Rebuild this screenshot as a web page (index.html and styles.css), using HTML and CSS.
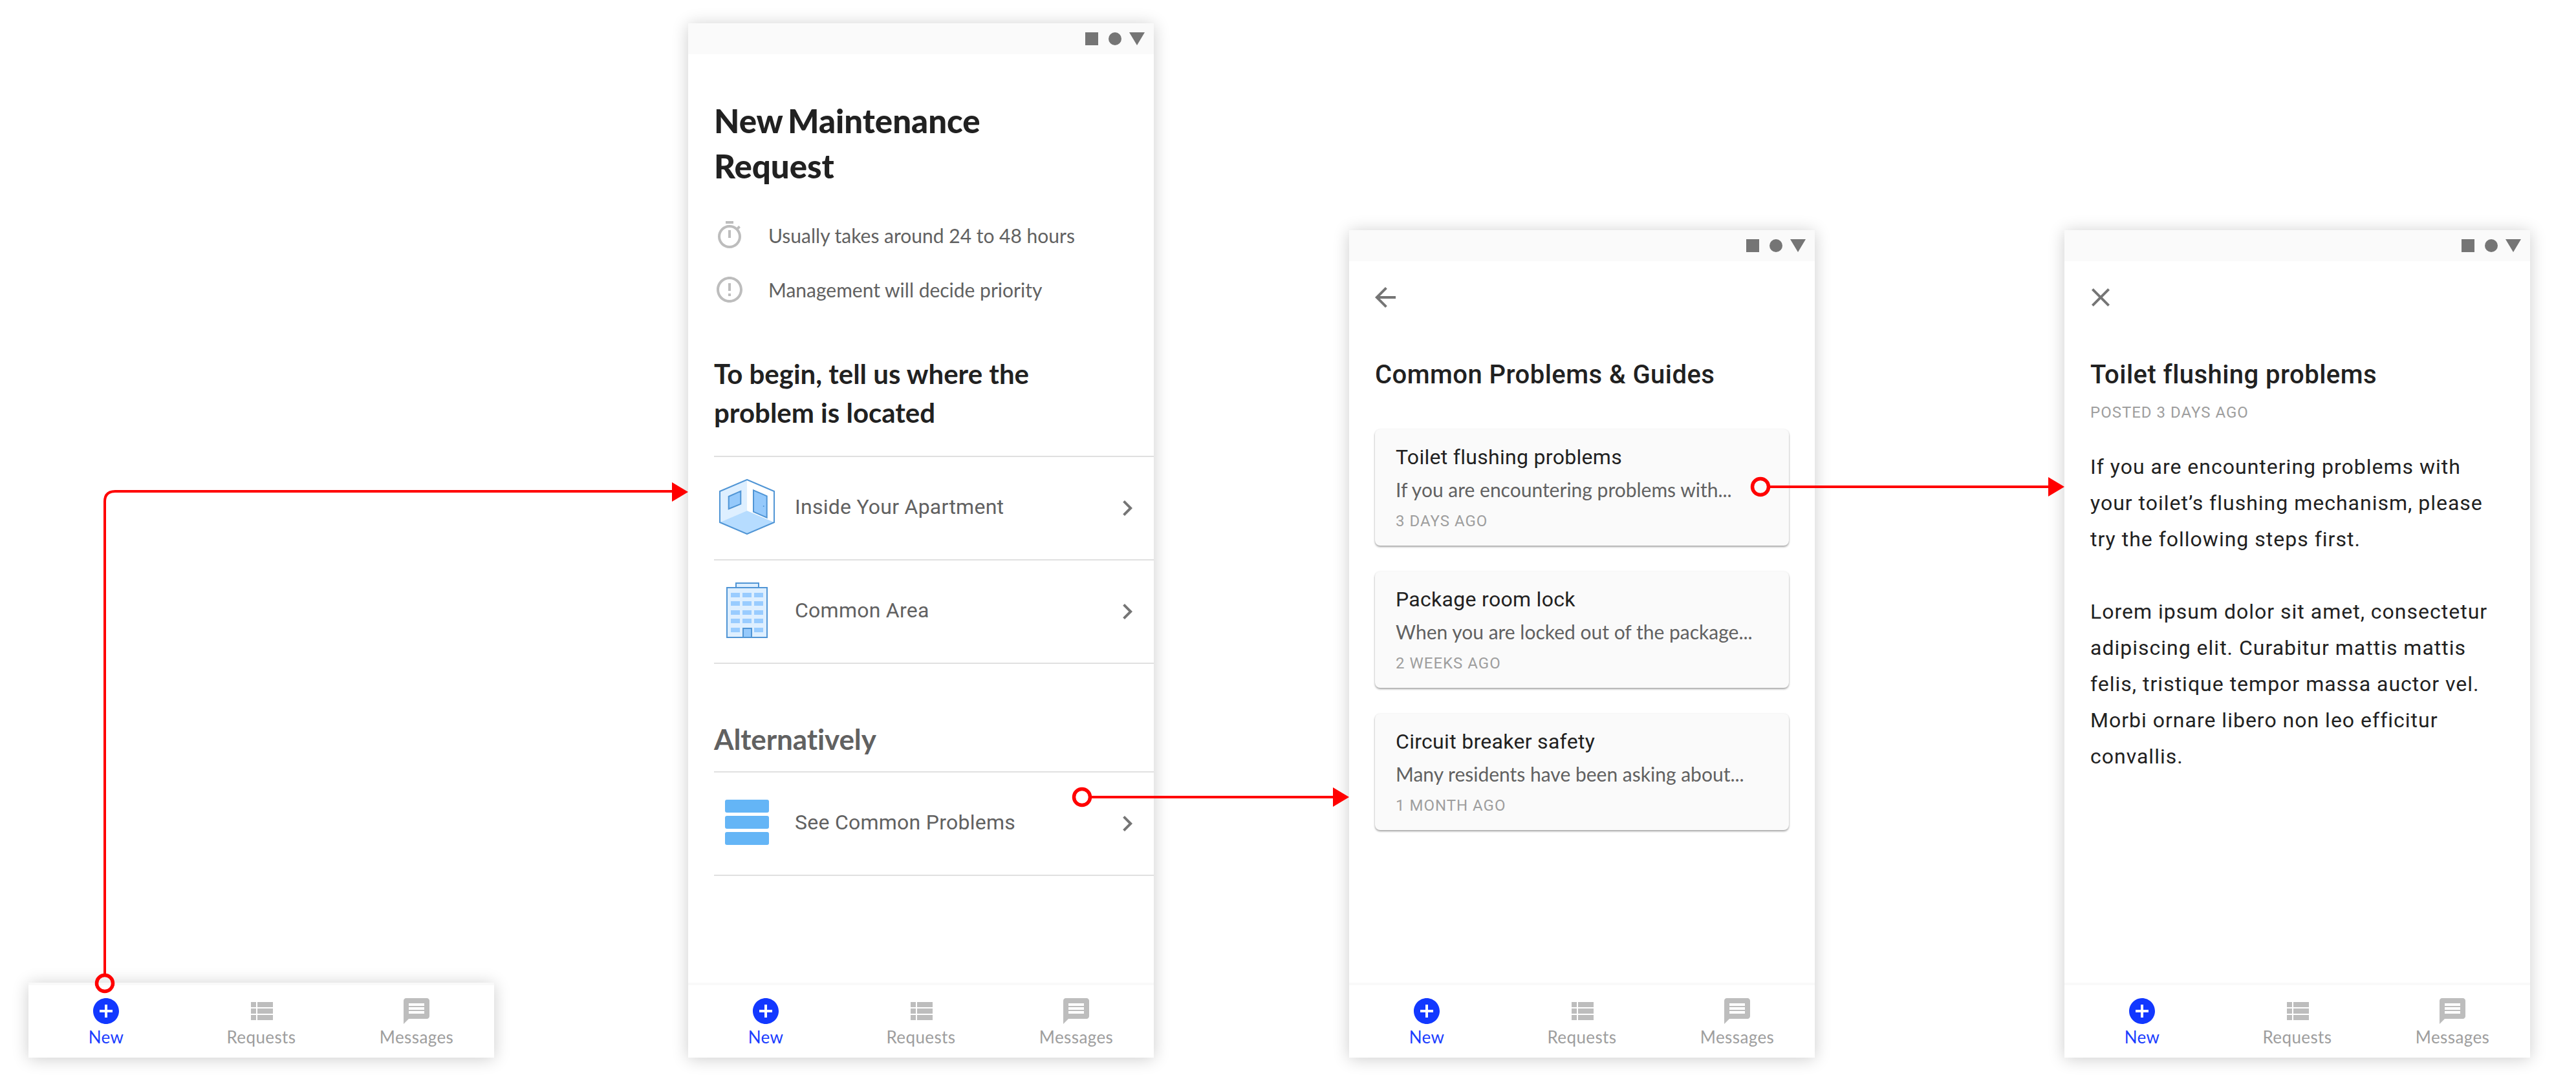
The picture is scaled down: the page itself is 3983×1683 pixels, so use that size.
FILE: index.html
```html
<!DOCTYPE html>
<html lang="en">
<head>
<meta charset="utf-8">
<title>Maintenance request flow</title>
<link rel="stylesheet" href="styles.css">
</head>
<body>
<svg class="defs" width="0" height="0" aria-hidden="true">
  <symbol id="i-add" viewBox="0 0 24 24"><path d="M12 2C6.48 2 2 6.48 2 12s4.48 10 10 10 10-4.48 10-10S17.52 2 12 2zm5 11h-4v4h-2v-4H7v-2h4V7h2v4h4v2z"/></symbol>
  <symbol id="i-list" viewBox="0 0 24 24"><path d="M4 14h4v-4H4v4zm0 5h4v-4H4v4zM4 9h4V5H4v4zm5 5h12v-4H9v4zm0 5h12v-4H9v4zM9 5v4h12V5H9z"/></symbol>
  <symbol id="i-msg" viewBox="0 0 24 24"><path d="M20 2H4c-1.1 0-1.99.9-1.99 2L2 22l4-4h14c1.1 0 2-.9 2-2V4c0-1.1-.9-2-2-2zm-2 12H6v-2h12v2zm0-3H6V9h12v2zm0-3H6V6h12v2z"/></symbol>
  <symbol id="i-chev" viewBox="0 0 24 24"><path d="M10 6L8.59 7.41 13.17 12l-4.58 4.59L10 18l6-6z"/></symbol>
  <symbol id="i-timer" viewBox="0 0 24 24"><path d="M15 1H9v2h6V1zm-4 13h2V8h-2v6zm8.03-6.61l1.42-1.42c-.43-.51-.9-.99-1.41-1.41l-1.42 1.42C16.07 4.74 14.12 4 12 4c-4.97 0-9 4.03-9 9s4.02 9 9 9 9-4.03 9-9c0-2.12-.74-4.07-1.97-5.61zM12 20c-3.87 0-7-3.13-7-7s3.13-7 7-7 7 3.13 7 7-3.13 7-7 7z"/></symbol>
  <symbol id="i-error" viewBox="0 0 24 24"><path d="M11 15h2v2h-2zm0-8h2v6h-2zm.99-5C6.47 2 2 6.48 2 12s4.47 10 9.99 10C17.52 22 22 17.52 22 12S17.52 2 11.99 2zM12 20c-4.42 0-8-3.58-8-8s3.58-8 8-8 8 3.58 8 8-3.58 8-8 8z"/></symbol>
  <symbol id="i-back" viewBox="0 0 24 24"><path d="M20 11H7.83l5.59-5.59L12 4l-8 8 8 8 1.41-1.41L7.83 13H20v-2z"/></symbol>
  <symbol id="i-close" viewBox="0 0 24 24"><path d="M19 6.41L17.59 5 12 10.59 6.41 5 5 6.41 10.59 12 5 17.59 6.41 19 12 13.41 17.59 19 19 17.59 13.41 12z"/></symbol>
  <symbol id="i-status" viewBox="0 0 92 20"><rect x="0" y="0" width="20" height="20"/><circle cx="46" cy="10" r="10"/><path d="M68 0h24L80 20z"/></symbol>
</svg>

<main class="canvas">
  <nav class="tabbar tabbar-solo">
    <div class="tab tab-active"><svg class="tab-icon"><use href="#i-add"/></svg><span>New</span></div>
    <div class="tab"><svg class="tab-icon"><use href="#i-list"/></svg><span>Requests</span></div>
    <div class="tab"><svg class="tab-icon"><use href="#i-msg"/></svg><span>Messages</span></div>
  </nav>

  <section class="phone phone-tall phone-a">
    <div class="status"><svg class="status-icons"><use href="#i-status"/></svg></div>
    <div class="request">
      <h1 class="request-title">New Maintenance<br>Request</h1>
      <div class="facts">
        <div class="fact"><svg class="icon-48 icon-light"><use href="#i-timer"/></svg><span>Usually takes around 24 to 48 hours</span></div>
        <div class="fact"><svg class="icon-48 icon-light"><use href="#i-error"/></svg><span>Management will decide priority</span></div>
      </div>
      <h2 class="request-sub">To begin, tell us where the<br>problem is located</h2>
    </div>
    <div class="list list-first">
      <div class="row">
        <div class="row-icon">
          <svg class="art-hex" viewBox="0 0 86 86">
            <path class="wall" d="M43 1L1 19v48l42-18z"/>
            <path class="floor" d="M43 49L1 67l42 18 42-18z"/>
            <path class="art-line" d="M43 1L85 19v48L43 85 1 67V19z"/>
            <path class="pane" d="M14.7 27l18.600-8.300v20L14.700 46.300z"/>
            <path class="pane" d="M53 17.300l20.700 9v33.400L53 50.700z"/>
            <circle class="knob" cx="68.700" cy="42" r="1"/>
          </svg>
        </div>
        <span class="row-label">Inside Your Apartment</span>
        <svg class="icon-48 icon-dark chev"><use href="#i-chev"/></svg>
      </div>
      <div class="row">
        <div class="row-icon">
          <svg class="art-building" viewBox="0 0 64 86">
            <path class="wall art-line" d="M15 8V1h35v7"/>
            <path class="wall art-line" d="M1 8h62v77H1z"/>
            <path class="pane-flat" d="M7 16h14v7H7zM25 16h14v7H25zM43 16h14v7H43zM7 29h14v7H7zM25 29h14v7H25zM43 29h14v7H43zM7 43h14v7H7zM25 43h14v7H25zM43 43h14v7H43zM7 56h14v7H7zM25 56h14v7H25zM43 56h14v7H43zM7 70h14v7H7zM43 70h14v7H43z"/>
            <path class="pane" d="M26 71h13v14H26z"/>
          </svg>
        </div>
        <span class="row-label">Common Area</span>
        <svg class="icon-48 icon-dark chev"><use href="#i-chev"/></svg>
      </div>
    </div>
    <h2 class="request-alt">Alternatively</h2>
    <div class="list">
      <div class="row">
        <div class="row-icon">
          <div class="stack"><i></i><i></i><i></i></div>
        </div>
        <span class="row-label">See Common Problems</span>
        <svg class="icon-48 icon-dark chev"><use href="#i-chev"/></svg>
      </div>
    </div>
    <nav class="tabbar">
      <div class="tab tab-active"><svg class="tab-icon"><use href="#i-add"/></svg><span>New</span></div>
      <div class="tab"><svg class="tab-icon"><use href="#i-list"/></svg><span>Requests</span></div>
      <div class="tab"><svg class="tab-icon"><use href="#i-msg"/></svg><span>Messages</span></div>
    </nav>
  </section>

  <section class="phone phone-short phone-b">
    <div class="status"><svg class="status-icons"><use href="#i-status"/></svg></div>
    <div class="pane-body">
      <svg class="icon-48 icon-dark nav-icon"><use href="#i-back"/></svg>
      <h2 class="screen-title">Common Problems &amp; Guides</h2>
      <div class="cards">
        <article class="card">
          <h3>Toilet flushing problems</h3>
          <p>If you are encountering problems with...</p>
          <time>3 days ago</time>
        </article>
        <article class="card">
          <h3>Package room lock</h3>
          <p>When you are locked out of the package...</p>
          <time>2 weeks ago</time>
        </article>
        <article class="card">
          <h3>Circuit breaker safety</h3>
          <p>Many residents have been asking about...</p>
          <time>1 month ago</time>
        </article>
      </div>
    </div>
    <nav class="tabbar">
      <div class="tab tab-active"><svg class="tab-icon"><use href="#i-add"/></svg><span>New</span></div>
      <div class="tab"><svg class="tab-icon"><use href="#i-list"/></svg><span>Requests</span></div>
      <div class="tab"><svg class="tab-icon"><use href="#i-msg"/></svg><span>Messages</span></div>
    </nav>
  </section>

  <section class="phone phone-short phone-c">
    <div class="status"><svg class="status-icons"><use href="#i-status"/></svg></div>
    <div class="pane-body">
      <svg class="icon-48 icon-dark nav-icon"><use href="#i-close"/></svg>
      <h2 class="screen-title">Toilet flushing problems</h2>
      <div class="posted">Posted 3 days ago</div>
      <div class="article">
        <p>If you are encountering problems with your toilet’s flushing mechanism, please try the following steps first.</p>
        <p>Lorem ipsum dolor sit amet, consectetur adipiscing elit. Curabitur mattis mattis felis, tristique tempor massa auctor vel. Morbi ornare libero non leo efficitur convallis.</p>
      </div>
    </div>
    <nav class="tabbar">
      <div class="tab tab-active"><svg class="tab-icon"><use href="#i-add"/></svg><span>New</span></div>
      <div class="tab"><svg class="tab-icon"><use href="#i-list"/></svg><span>Requests</span></div>
      <div class="tab"><svg class="tab-icon"><use href="#i-msg"/></svg><span>Messages</span></div>
    </nav>
  </section>

  <svg class="wires" viewBox="0 0 3983 1683">
    <path class="wire" d="M162 1507V776q0-16 16-16H1042"/>
    <circle class="node" cx="162" cy="1521" r="12.500"/>
    <path class="tip" d="M1039 746l25 15-25 15z"/>
    <path class="wire" d="M1686 1233H2064"/>
    <circle class="node" cx="1673" cy="1233" r="12.500"/>
    <path class="tip" d="M2061 1218l25 15-25 15z"/>
    <path class="wire" d="M2735 753H3170"/>
    <circle class="node" cx="2722" cy="753" r="12.500"/>
    <path class="tip" d="M3167 738l25 15-25 15z"/>
  </svg>
</main>
</body>
</html>
```
FILE: styles.css
```css
* { box-sizing: border-box; }
html, body { margin: 0; padding: 0; background: #fff; }
body { font-family: "Roboto", sans-serif; color: #212121; }
h1, h2, h3, p { margin: 0; }
.defs { position: absolute; }

.canvas {
  position: relative;
  width: 3983px;
  height: 1683px;
  display: flex;
  align-items: flex-end;
  padding: 0 0 47px 44px;
  overflow: hidden;
}

.phone {
  width: 720px;
  display: flex;
  flex-direction: column;
  background: #fff;
  box-shadow: 0 2px 24px rgba(0, 0, 0, .2);
}
.phone-tall { height: 1600px; }
.phone-short { height: 1280px; }
.phone-a { margin-left: 300px; }
.phone-b { margin-left: 302px; }
.phone-c { margin-left: 386px; }

.status {
  height: 48px;
  flex: none;
  background: #fafafa;
  display: flex;
  justify-content: flex-end;
  align-items: center;
  padding-right: 14px;
}
.status-icons { width: 92px; height: 20px; fill: #757575; }

.icon-48 { width: 48px; height: 48px; flex: none; display: block; }
.icon-light { fill: #bdbdbd; }
.icon-dark { fill: #757575; }

/* Tab bar */
.tabbar {
  width: 720px;
  height: 116px;
  flex: none;
  margin-top: auto;
  display: grid;
  grid-template-columns: repeat(3, 1fr);
  background: #fff;
  border-top: 4px solid #f9f9f9;
}
.tabbar-solo { margin-top: 0; box-shadow: 0 2px 24px rgba(0, 0, 0, .2); }
.tab {
  position: relative;
  display: flex;
  flex-direction: column;
  align-items: center;
  font: 400 26px/30px "Lato", sans-serif;
  letter-spacing: .4px;
  color: #9e9e9e;
  fill: #bdbdbd;
  padding-top: 16px;
}
.tab-icon { width: 48px; height: 48px; display: block; margin-bottom: 1px; }
.tab-active { color: #1a3dff; fill: #1238ff; }

/* Request screen */
.request { padding: 68px 40px 0; }
.request-title {
  font: 900 51px/70px "Lato", sans-serif;
  word-spacing: -4px;
  color: #212121;
}
.facts { margin-top: 48px; display: flex; flex-direction: column; gap: 36px; }
.fact {
  display: flex;
  align-items: center;
  gap: 36px;
  font: 400 30px/48px "Lato", sans-serif;
  color: #616161;
}
.request-sub {
  margin-top: 76px;
  font: 700 42px/60px "Lato", sans-serif;
  color: #212121;
}
.request-alt {
  margin: 86px 0 20px 40px;
  font: 700 44px/60px "Lato", sans-serif;
  letter-spacing: -.1px;
  color: #616161;
}
.list { margin-left: 40px; border-top: 2px solid #e0e0e0; }
.list-first { margin-top: 37px; }
.row {
  height: 160px;
  display: flex;
  align-items: center;
  border-bottom: 2px solid #e0e0e0;
}
.row-icon { width: 102px; flex: none; display: flex; justify-content: center; margin-right: 23px; margin-top: -4px; }
.row-label { flex: 1; font: 400 32px/44px "Roboto", sans-serif; letter-spacing: .25px; color: #616161; margin-top: -4px; }
.chev { margin-right: 17px; }

.art-hex { width: 86px; height: 86px; display: block; }
.art-building { width: 64px; height: 86px; display: block; }
.wall { fill: #deefff; }
.floor { fill: #b6dcff; }
.art-line { fill-rule: nonzero; stroke: #5095d5; stroke-width: 2; stroke-linejoin: miter; }
path.art-line:not(.wall) { fill: none; }
.pane { fill: #95c9fb; stroke: #5095d5; stroke-width: 2; }
.pane-flat { fill: #99ccff; }
.knob { fill: #5095d5; }
.stack { width: 68px; display: flex; flex-direction: column; gap: 5px; }
.stack i { display: block; height: 20px; border-radius: 3px; background: #64b5f6; }

/* Lists and article */
.pane-body { padding: 32px 40px 0; }
.nav-icon { margin-left: -8px; }
.screen-title {
  margin-top: 68px;
  font: 500 40px/56px "Roboto", sans-serif;
  letter-spacing: .45px;
  color: #212121;
}
.cards { margin-top: 56px; display: flex; flex-direction: column; gap: 40px; }
.card {
  height: 180px;
  padding: 21px 32px 0;
  background: #fafafa;
  border-radius: 8px;
  box-shadow: 0 2px 3px rgba(0, 0, 0, .35), 0 0 3px rgba(0, 0, 0, .06);
}
.card h3 { font: 400 32px/44px "Roboto", sans-serif; letter-spacing: .3px; color: #212121; }
.card p { margin-top: 6px; font: 400 30px/44px "Lato", sans-serif; color: #616161; }
.card time {
  display: block;
  margin-top: 11px;
  font: 400 24px/32px "Roboto", sans-serif;
  letter-spacing: 1px;
  color: #9e9e9e;
  text-transform: uppercase;
}
.posted {
  margin-top: 14px;
  font: 400 24px/32px "Roboto", sans-serif;
  letter-spacing: 1px;
  color: #9e9e9e;
  text-transform: uppercase;
}
.article { margin-top: 40px; display: flex; flex-direction: column; gap: 56px; }
.article p { font: 400 32px/56px "Roboto", sans-serif; letter-spacing: 1px; color: #212121; }

/* Flow connectors over the screens */
.wires { position: absolute; left: 0; top: 0; width: 3983px; height: 1683px; pointer-events: none; }
.wire { fill: none; stroke: #ff0000; stroke-width: 4; }
.node { fill: none; stroke: #ff0000; stroke-width: 5.500; }
.tip { fill: #ff0000; }
```
